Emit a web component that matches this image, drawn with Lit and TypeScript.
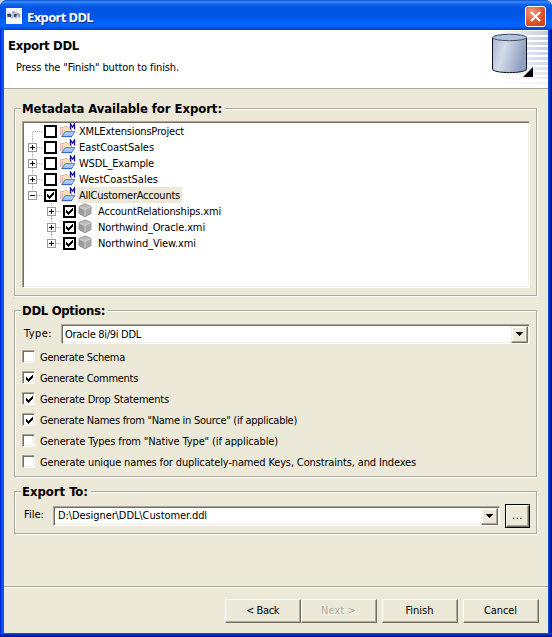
import { LitElement, html, css, svg, nothing } from "lit";
import { customElement, property } from "lit/decorators.js";

/** A label whose tracking is adjusted so that it spans a given width. */
@customElement("fit-text")
class FitText extends LitElement {
  @property() text = "";
  @property({ type: Number }) w = 0;
  static styles = css`
    :host { display: inline-block; white-space: pre; }
    .t { display: inline-block; white-space: pre; }
  `;
  render() {
    return html`<span class="t">${this.text}</span>`;
  }
  updated() {
    const el = this.renderRoot.querySelector(".t") as HTMLElement;
    el.style.letterSpacing = "0px";
    const natural = el.getBoundingClientRect().width;
    if (this.w) el.style.letterSpacing = `${(this.w - natural) / this.text.length}px`;
  }
}

const t = (text: string, w: number) => html`<fit-text .text=${text} .w=${w}></fit-text>`;

const tick = svg`<path d="M0 2h1v1h1v1h1v-1h1v-1h1v-1h1v-1h1v3h-1v1h-1v1h-1v1h-1v1h-1v-1h-1v-1h-1z"/>`;
const tickIcon = html`<svg class="tick" width="7" height="7" viewBox="0 0 7 7" shape-rendering="crispEdges">${tick}</svg>`;

const folderIcon = html`<svg class="icon" width="17" height="16" viewBox="0 0 17 16">
  <path d="M3.500 12.500V5.500L5.500 3.500H8.500L9.500 5H12.500V12z" fill="#fae3b8" stroke="#e0bd90"/>
  <path d="M1 4.500h3M1.500 5v7.500M3 12.500V6" stroke="#c9a6a0" fill="none" stroke-width=".8"/>
  <path d="M3 13.300L6.500 8.600H15.800L12.800 13.300z" fill="#a4cffa" stroke="#4a7ccc"/>
  <path d="M2.500 13.700H13" stroke="#3c5cae"/>
  <path d="M11.500 6.500V1L13.500 4L15.500 1V6.500" fill="none" stroke="#101094" stroke-width="1.300"/>
</svg>`;

const cubeIcon = html`<svg class="icon" width="14" height="15" viewBox="0 0 14 15">
  <path d="M7 1L13 3.500V10.500L7 13.800L1 10.500V3.500z" fill="#9c9c9c" stroke="#848484" stroke-width=".8"/>
  <path d="M7 1.500L12.500 3.700L7 6.200L1.500 3.700z" fill="#bcbcbc"/>
  <path d="M7.500 6.800L12.500 4.500V10.200L7.500 13z" fill="#a8a8a8"/>
  <path d="M1.300 3.900L7 6.400L12.700 3.900M7 6.400V13" fill="none" stroke="#dedede" stroke-width=".9"/>
</svg>`;

interface Node { name: string; w: number; depth: number; checked: boolean; box: "" | "+" | "-"; sel?: boolean; first?: boolean; last?: boolean }
const nodes: Node[] = [
  { name: "XMLExtensionsProject", w: 105, depth: 0, checked: false, box: "", first: true },
  { name: "EastCoastSales", w: 75, depth: 0, checked: false, box: "+" },
  { name: "WSDL_Example", w: 75, depth: 0, checked: false, box: "+" },
  { name: "WestCoastSales", w: 79, depth: 0, checked: false, box: "+" },
  { name: "AllCustomerAccounts", w: 101, depth: 0, checked: true, box: "-", sel: true, last: true },
  { name: "AccountRelationships.xmi", w: 123, depth: 1, checked: true, box: "+" },
  { name: "Northwind_Oracle.xmi", w: 107, depth: 1, checked: true, box: "+" },
  { name: "Northwind_View.xmi", w: 98, depth: 1, checked: true, box: "+", last: true },
];

const options: [string, number, boolean][] = [
  ["Generate Schema", 85, false],
  ["Generate Comments", 98, true],
  ["Generate Drop Statements", 129, true],
  ["Generate Names from \"Name in Source\" (if applicable)", 257, true],
  ["Generate Types from \"Native Type\" (if applicable)", 238, false],
  ["Generate unique names for duplicately-named Keys, Constraints, and Indexes", 376, false],
];

@customElement("app-root")
class AppRoot extends LitElement {
  static styles = css`
    :host { display: block; width: 552px; height: 637px; overflow: hidden; background: #c9d3e8;
      font: 11px/16px "DejaVu Sans Condensed", "DejaVu Sans", sans-serif; color: #000; }
    * { box-sizing: border-box; }
    svg { display: block; flex: none; }
    .window { height: 637px; display: flex; flex-direction: column; padding: 0 4px 4px; border-radius: 7px 7px 0 0;
      background: linear-gradient(90deg, #0019cf 0, #0035dd 1px, #0f5cf0 2px, #0a50e6 4px, #0a50e6 548px, #0441d8 549px, #0024b0 550px, #00138c 552px); }
    .bar { height: 30px; margin: 0 -4px; padding: 1px 6px 0; display: flex; align-items: center; border-radius: 7px 7px 0 0;
      background: linear-gradient(180deg, #0a4fd0 0, #3c8cf8 2px, #1268ee 4px, #0456e3 7px, #0054e3 12px, #0058ec 18px, #0265fd 23px, #0263fa 26px, #0052dc 28px, #003fca 30px); }
    .title { flex: 1; margin-left: 5px; padding-top: 2px; color: #fff; font: bold 13px/16px "Noto Sans", "Open Sans", sans-serif; text-shadow: 1px 1px 0 #0a2f8e; }
    .logo { margin-top: 1px; }
    .close { width: 21px; height: 21px; border: 1px solid #fff; border-radius: 3px; margin-top: 2px; display: grid; place-items: center;
      background: radial-gradient(circle at 30% 25%, #f09a80, #e0522d 55%, #c83a12); }
    .head { height: 58px; background: #fff; display: flex; }
    .headtext { flex: 1; padding: 8px 0 0 4px; }
    .h { font-weight: bold; font-size: 13px; line-height: 16px; }
    .sub { margin: 6px 0 0 8px; line-height: 15px; }
    .body { flex: 1; background: #ece9d8; padding: 19px 11px 0 10px; border-top: 1px solid #aca899; display: flex; flex-direction: column; }
    .group { border: 1px solid #aca899; box-shadow: 1px 1px 0 #fff, inset 1px 1px 0 #fff; }
    .g1 { height: 188px; padding: 0 6px 0 7px; }
    .g2 { height: 167px; margin-top: 14px; padding: 0 6px 0 7px; }
    .g3 { height: 43px; margin-top: 14px; padding: 0 6px 0 7px; }
    .legend { display: block; width: max-content; height: 16px; margin: -8px 0 0 -1px; padding: 0 3px 0 1px; background: #ece9d8; }
    .tree { height: 167px; margin-top: 4px; background: #fff; padding: 1px 0 0 4px; }
    .sunk { border: 1px solid; border-color: #aca899 #fff #fff #aca899; box-shadow: inset 1px 1px 0 #716f64, inset -1px -1px 0 #f1efe2; }
    .row { height: 16px; display: flex; align-items: center; }
    .row.d1 { padding-left: 19px; }
    .row .icon { margin-left: 2px; }
    .d1 .icon { margin-top: -1px; }
    .name { margin-left: 1px; padding: 1px 2px 0; height: 16px; line-height: 16px; }
    .d1 .name { margin-left: 4px; }
    .sel { background: #ece9d8; }
    .check { width: 13px; height: 13px; border: 2px solid #000; display: grid; place-items: center; flex: none; }
    .opts { margin-top: 3px; }
    .opt { display: flex; align-items: center; height: 21px; gap: 5px; }
    .box { width: 13px; height: 13px; margin-bottom: 2px; flex: none; background: #fff; display: grid; place-items: center; padding: 1px 0 0 1px; }
    .field { display: flex; align-items: center; }
    .type { margin: 4px 0 0 2px; height: 21px; }
    .type .val { padding-top: 1px; }
    .file { margin: 4px 0 0 2px; height: 24px; }
    .combo { flex: 1; height: 20px; background: #fff; display: flex; align-items: center; padding: 2px 1px 1px 3px; }
    .combo .val { flex: 1; line-height: 16px; }
    .file .val { padding-left: 1px; }
    .file .combo { margin-top: -1px; }
    .drop { width: 17px; height: 17px; display: grid; place-items: center; background: #ece9d8; border: 1px solid; border-color: #f1efe2 #716f64 #716f64 #f1efe2; box-shadow: inset -1px -1px 0 #aca899, inset 1px 1px 0 #fff; }
    .lt { width: 37px; }
    .lf { width: 29px; margin-top: -2px; }
    .btn { height: 24px; width: 77px; display: grid; place-items: center; background: #ece9d8; border: 1px solid; border-color: #fff #716f64 #716f64 #fff; box-shadow: inset -1px -1px 0 #aca899; }
    .browse { width: 25px; margin-left: 5px; border-color: #000; box-shadow: inset 1px 1px 0 #fff, inset -1px -1px 0 #716f64, inset -2px -2px 0 #aca899; }
    .foot { height: 47px; background: #ece9d8; border-top: 1px solid #aca899; box-shadow: inset 0 1px 0 #fff; display: flex; justify-content: flex-end; padding: 12px 9px 0 0; }
    .foot .btn { width: 76px; padding: 0 1px 1px 0; }
    .gap { margin-left: 5px; }
    .off { color: #aca899; text-shadow: 1px 1px 0 #fff; }
    .bottom { height: 4px; margin: 0 -4px -4px; background: linear-gradient(180deg, #0d55e8 0, #0441d8 1px, #0024b0 2px, #00138c 4px); }
  `;

  private branch(n: Node) {
    return html`<svg width="17" height="16" viewBox="0 0 17 16" shape-rendering="crispEdges">
      <path d="M${n.box ? 10 : 6} 8.500H16" stroke="#a8a8a8" stroke-dasharray="1 1"/>
      ${n.first ? nothing : svg`<path d="M5.500 0V4" stroke="#a8a8a8" stroke-dasharray="1 1"/>`}
      ${n.last ? nothing : svg`<path d="M5.500 ${n.box ? 13 : 9}V16" stroke="#a8a8a8" stroke-dasharray="1 1"/>`}
      ${n.box ? svg`<rect x="1.500" y="4.500" width="8" height="8" fill="#fff" stroke="#9a9a9a"/><path d="M3 8.500H8" stroke="#000"/>` : nothing}
      ${n.box === "+" ? svg`<path d="M5.500 6V11" stroke="#000"/>` : nothing}
    </svg>`;
  }

  private drop() {
    return html`<span class="drop"><svg width="7" height="4" viewBox="0 0 7 4" shape-rendering="crispEdges"><path d="M0 0h7v1h-1v1h-1v1h-1v1h-1v-1h-1v-1h-1v-1h-1z"/></svg></span>`;
  }

  private banner() {
    return html`<svg width="60" height="58" viewBox="0 0 60 58">
      <defs>
        <linearGradient id="fade" gradientUnits="userSpaceOnUse" x1="5" x2="60" y1="0" y2="0"><stop offset="0" stop-color="#c8cfe2" stop-opacity="0"/><stop offset=".55" stop-color="#c8cfe2" stop-opacity=".55"/><stop offset="1" stop-color="#c4cbe0"/></linearGradient>
        <linearGradient id="cyl" x2="1" y2=".3"><stop offset="0" stop-color="#a8b6d0"/><stop offset=".4" stop-color="#d3dbea"/><stop offset="1" stop-color="#8e9fc0"/></linearGradient>
      </defs>
      ${[[1, 4, 1], [7, 3, 1], [12, 3, 1], [17, 3, 0.95], [22, 3, 0.9], [27, 3, 0.85], [32, 3, 0.75], [37, 3, 0.6], [42, 3, 0.5], [47, 2, 0.4], [52, 2, 0.25]].map(
        ([y, h, o]) => svg`<rect x="5" y=${y} width="55" height=${h} fill="url(#fade)" opacity=${o}/>`)}
      <path d="M4.500 7.500V39C5 43.800 38 43.800 38.500 39V7.500z" fill="url(#cyl)" stroke="#10131a"/>
      <ellipse cx="21.500" cy="7.500" rx="17" ry="3.200" fill="#b2c1dc" stroke="#3e506c"/>
      <path d="M45 37V47H35z" fill="#000"/>
    </svg>`;
  }

  render() {
    return html`<div class="window">
      <div class="bar">
        <svg class="logo" width="16" height="16" viewBox="0 0 16 16">
          <rect width="16" height="16" fill="#f6f7fb"/>
          <path d="M0 7L3 4L6 6L7 4H10L13 5L15 8L13 11L12 8L10 11L8 9L6 11L4 9L1 10z" fill="#b9c0cd"/>
          <path d="M1 6h4v3H2zM8 6h3l-1 3H8z" fill="#30487c"/><path d="M6 4h3M11 6h2v3" stroke="#818c9e" fill="none"/>
        </svg>
        <div class="title">${t("Export DDL", 66)}</div>
        <div class="close"><svg width="13" height="13" viewBox="0 0 13 13"><path d="M2 2L11 11M11 2L2 11" stroke="#fff" stroke-width="2.100"/></svg></div>
      </div>
      <div class="head">
        <div class="headtext">
          <div class="h">${t("Export DDL", 71)}</div>
          <div class="sub">${t("Press the \"Finish\" button to finish.", 163)}</div>
        </div>
        ${this.banner()}
      </div>
      <div class="body">
        <div class="group g1">
          <div class="h legend">${t("Metadata Available for Export:", 200)}</div>
          <div class="tree sunk">
            ${nodes.map((n) => html`<div class="row d${n.depth}">
              ${this.branch(n)}
              <span class="check">${n.checked ? tickIcon : nothing}</span>
              ${n.depth ? cubeIcon : folderIcon}
              <span class="name ${n.sel ? "sel" : ""}">${t(n.name, n.w)}</span>
            </div>`)}
          </div>
        </div>
        <div class="group g2">
          <div class="h legend">${t("DDL Options:", 83)}</div>
          <div class="field type">
            <span class="lt">${t("Type:", 28)}</span>
            <div class="combo sunk"><span class="val">${t("Oracle 8i/9i DDL", 76)}</span>${this.drop()}</div>
          </div>
          <div class="opts">
            ${options.map(([label, w, on]) => html`<div class="opt">
              <span class="box sunk">${on ? tickIcon : nothing}</span>${t(label, w)}
            </div>`)}
          </div>
        </div>
        <div class="group g3">
          <div class="h legend">${t("Export To:", 66)}</div>
          <div class="field file">
            <span class="lf">${t("File:", 20)}</span>
            <div class="combo sunk"><span class="val">${t("D:\\Designer\\DDL\\Customer.ddl", 149)}</span>${this.drop()}</div>
            <div class="btn browse">${t("...", 11)}</div>
          </div>
        </div>
      </div>
      <div class="foot">
        <div class="btn">${t("< Back", 33)}</div>
        <div class="btn off">${t("Next >", 35)}</div>
        <div class="btn gap">${t("Finish", 28)}</div>
        <div class="btn gap">${t("Cancel", 33)}</div>
      </div>
      <div class="bottom"></div>
    </div>`;
  }
}
